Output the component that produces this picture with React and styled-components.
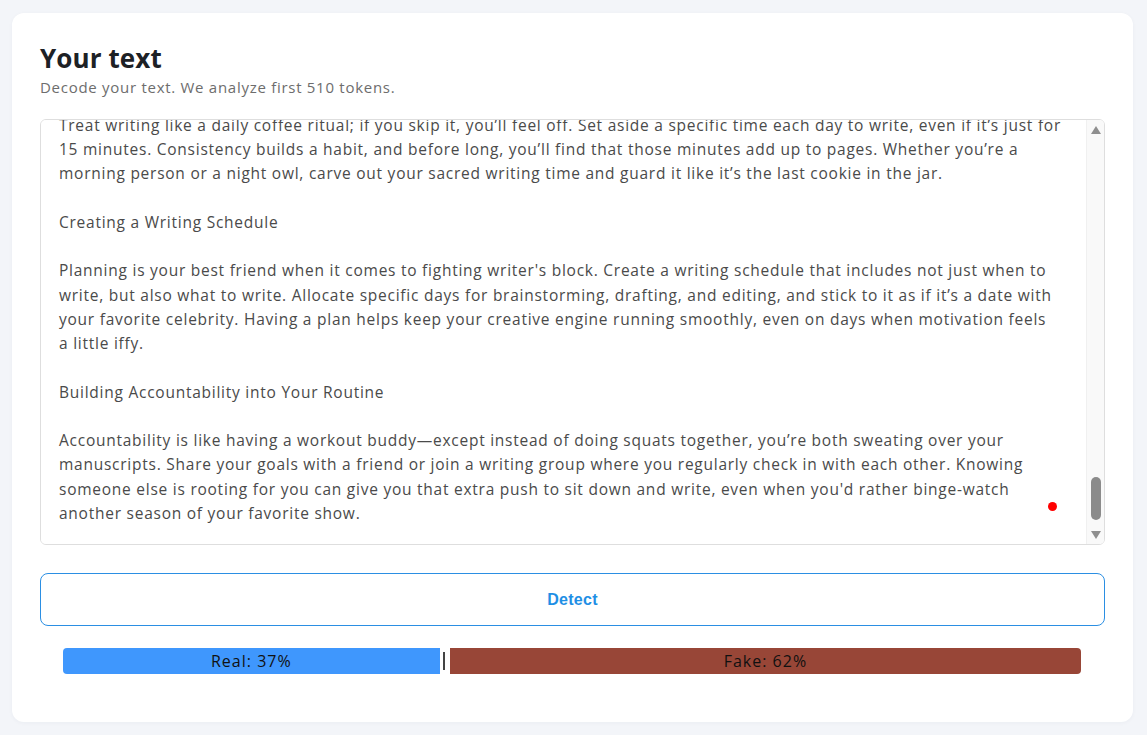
import React, { useLayoutEffect, useRef } from 'react';
import styled, { createGlobalStyle } from 'styled-components';

const intro = `How to Beat Writer's Block: Practical Tips for Getting Your Words Flowing Again

Writer's block happens to everyone, from first-time bloggers to bestselling novelists. The blank page stares back at you, the cursor blinks, and suddenly every idea you had this morning has packed its bags and left town. The good news is that writer's block is not a permanent condition. With a few simple habits and a little patience, you can get your words flowing again.

Understanding Writer's Block

Before you can beat writer's block, it helps to understand where it comes from. Sometimes it's fear of failure, sometimes it's perfectionism, and sometimes you're simply tired. Stress, distractions, and a lack of structure can all make it harder to sit down and write. Recognizing the cause is the first step toward moving past it.

Lowering the Stakes

Perfectionism is one of the biggest culprits behind a stalled draft. Give yourself permission to write badly. A messy first draft is still a draft, and you can't edit a blank page. Remind yourself that nobody has to see this version, and that every great piece of writing started out as something rough and unpolished.

Changing Your Environment

If you always write at the same desk, try moving to the kitchen table, a park bench, or a quiet corner of your local library. A new setting can shake loose fresh ideas and give your brain a little jolt of novelty. Even rearranging your workspace or switching from a keyboard to pen and paper can make a surprising difference.

Freewriting to Warm Up

Set a timer for ten minutes and write whatever comes to mind without stopping. Don't worry about grammar, spelling, or whether it makes sense. The goal is to get your fingers moving and your thoughts flowing. More often than not, a useful idea will pop up somewhere in the middle of the mess.

Reading for Inspiration

Great writers are great readers. When the words won't come, pick up a book, an article, or a poem you love. Pay attention to how other writers structure their sentences and build their arguments. Reading reminds you why you fell in love with words in the first place, and it refills the well you draw from.

Taking Breaks Without Guilt

Sometimes the best thing you can do for your writing is to step away from it. Go for a walk, stretch, make a snack, or take a nap. Your brain keeps working on problems in the background, and you may return to your desk with the exact sentence you were looking for.

Breaking Big Tasks into Small Steps

A whole article or chapter can feel overwhelming. Break it into small, manageable pieces: an outline, a single section, a single paragraph. Celebrate each little win along the way. Progress builds momentum, and momentum is the enemy of writer's block.

Silencing Your Inner Critic

Your inner critic loves to show up at the worst possible moment. When it starts whispering that your ideas aren't good enough, thank it for its opinion and keep typing. Editing is a separate job for a separate day. Right now, your only task is to get words on the page.

Establishing a Routine

`;

const visible = [
	'Treat writing like a daily coffee ritual; if you skip it, you’ll feel off. Set aside a specific time each day to write, even if it’s just for',
	'15 minutes. Consistency builds a habit, and before long, you’ll find that those minutes add up to pages. Whether you’re a',
	'morning person or a night owl, carve out your sacred writing time and guard it like it’s the last cookie in the jar.',
	'',
	'Creating a Writing Schedule',
	'',
	"Planning is your best friend when it comes to fighting writer's block. Create a writing schedule that includes not just when to",
	'write, but also what to write. Allocate specific days for brainstorming, drafting, and editing, and stick to it as if it’s a date with',
	'your favorite celebrity. Having a plan helps keep your creative engine running smoothly, even on days when motivation feels',
	'a little iffy.',
	'',
	'Building Accountability into Your Routine',
	'',
	'Accountability is like having a workout buddy—except instead of doing squats together, you’re both sweating over your',
	'manuscripts. Share your goals with a friend or join a writing group where you regularly check in with each other. Knowing',
	"someone else is rooting for you can give you that extra push to sit down and write, even when you'd rather binge-watch",
	'another season of your favorite show.',
].join('\n');

const GlobalStyle = createGlobalStyle`
	body {
		margin: 0;
		background: #f3f5f9;
		font-family: "Open Sans", "Liberation Sans", sans-serif;
	}
`;

function TextBox() {
	const ref = useRef(null);
	useLayoutEffect(() => {
		if (ref.current) ref.current.scrollTop = ref.current.scrollHeight;
	}, []);
	return (
		<TextWrap>
			<TextArea ref={ref} readOnly defaultValue={intro + visible} />
			<ScrollRail>
				<RailButton><Arrow dir="up" /></RailButton>
				<RailTrack>
					<Thumb />
				</RailTrack>
				<RailButton><Arrow dir="down" /></RailButton>
			</ScrollRail>
			<Dot />
		</TextWrap>
	);
}

export default function App() {
	const real = 37;
	const fake = 62;
	return (
		<>
			<GlobalStyle />
			<Page>
				<Card>
					<Title>Your text</Title>
					<Subtitle>Decode your text. We analyze first 510 tokens.</Subtitle>
					<TextBox />
					<DetectButton>Detect</DetectButton>
					<ResultBar>
						<Segment color="#3f97fd" left style={{ width: `${real}%` }}>Real: {real}%</Segment>
						<Divider />
						<Segment color="#984637" right style={{ width: `${fake}%` }}>Fake: {fake}%</Segment>
					</ResultBar>
				</Card>
			</Page>
		</>
	);
}

const Page = styled.div`
	padding: 13px 14px 13px 12px;
	min-height: 735px;
	box-sizing: border-box;
`;

const Card = styled.div`
	background: #fff;
	border-radius: 12px;
	padding: 28px 28px 48px 28px;
	display: flex;
	flex-direction: column;
	box-shadow: 0 1px 4px rgba(30, 40, 70, 0.04);
`;

const Title = styled.h1`
	margin: 0;
	font-size: 26px;
	font-weight: 700;
	line-height: 34px;
	color: #1d2125;
	letter-spacing: 0.1px;
`;

const Subtitle = styled.p`
	margin: 2px 0 22px;
	font-size: 15px;
	line-height: 20px;
	letter-spacing: 0.72px;
	color: #6d6d6d;
`;

const TextWrap = styled.div`
	position: relative;
`;

const TextArea = styled.textarea`
	display: block;
	width: 100%;
	box-sizing: border-box;
	height: 426px;
	border: 1px solid #dedede;
	border-radius: 6px;
	padding: 12px 18px 19px 18px;
	font-family: "Open Sans", "Liberation Sans", sans-serif;
	font-size: 15.5px;
	line-height: 24.25px;
	letter-spacing: 0.75px;
	color: #4a4a4a;
	resize: none;
	outline: none;
	overflow-y: scroll;
	scrollbar-width: none;
`;

const ScrollRail = styled.div`
	position: absolute;
	top: 1px;
	right: 1px;
	bottom: 1px;
	width: 17px;
	display: flex;
	flex-direction: column;
	background: #f9f9f9;
	border-left: 1px solid #f0f0f0;
	border-radius: 0 5px 5px 0;
`;

const RailButton = styled.div`
	height: 17px;
	display: flex;
	align-items: center;
	justify-content: center;
`;

const Arrow = styled.span`
	width: 0;
	height: 0;
	border-left: 5.5px solid transparent;
	border-right: 5.5px solid transparent;
	${p => (p.dir === 'up'
		? 'border-bottom: 8px solid #8f8f8f; margin-top: 2px;'
		: 'border-top: 8px solid #8f8f8f; margin-top: -2px;')}
`;

const RailTrack = styled.div`
	flex: 1;
	display: flex;
	flex-direction: column;
	justify-content: flex-end;
	align-items: center;
	padding-bottom: 7px;
`;

const Thumb = styled.div`
	width: 10px;
	height: 43px;
	border-radius: 5px;
	background: #8b8b8b;
`;

const Dot = styled.span`
	position: absolute;
	right: 48px;
	bottom: 34px;
	width: 9px;
	height: 9px;
	border-radius: 50%;
	background: #f00;
`;

const DetectButton = styled.button`
	margin-top: 28px;
	height: 53px;
	background: #fff;
	border: 1px solid #2b8fe3;
	border-radius: 8px;
	color: #1f8fe5;
	font-family: "Liberation Sans", Arial, sans-serif;
	font-weight: 700;
	font-size: 16px;
	letter-spacing: 0.3px;
	cursor: pointer;
`;

const ResultBar = styled.div`
	display: flex;
	margin: 22px 24px 0 23px;
	height: 26px;
`;

const Segment = styled.div`
	background: ${p => p.color};
	color: #111;
	display: flex;
	align-items: center;
	justify-content: center;
	font-size: 16px;
	letter-spacing: 1px;
	border-radius: ${p => (p.left ? '4px 0 0 4px' : p.right ? '0 4px 4px 0' : '0')};
`;

const Divider = styled.div`
	flex: 1;
	display: flex;
	align-items: center;
	justify-content: center;
	&::before {
		content: '';
		width: 2px;
		height: 18px;
		margin-left: -2px;
		background: #444;
	}
`;
